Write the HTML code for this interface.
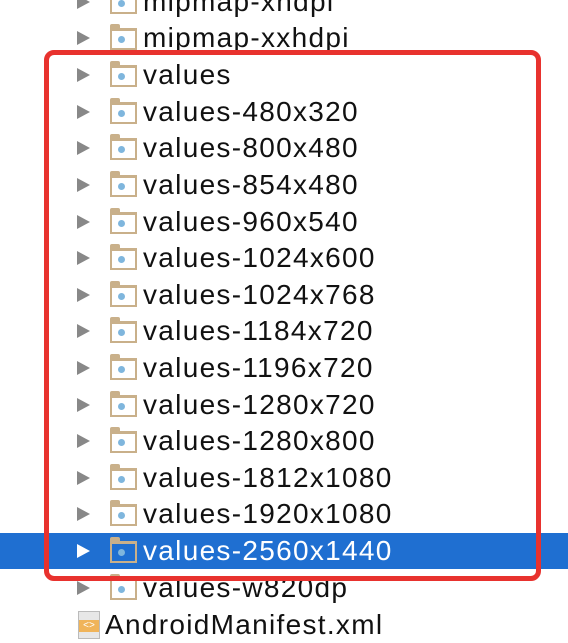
<!DOCTYPE html><html><head><style>
body{margin:0;width:568px;height:638px;background:#fff;overflow:hidden;position:relative;font-family:"Liberation Sans",sans-serif}
.r{position:absolute;left:0;width:568px;height:36px}
.t{position:absolute;left:77px;top:11px;width:0;height:0;border-left:13px solid #888;border-top:7px solid transparent;border-bottom:7px solid transparent}
.f{position:absolute;left:110px;top:8px;width:23px;height:17px;border:2px solid #c9b08a;border-top-width:3px;background:#fff}
.f:before{content:"";position:absolute;left:-2px;top:-7px;width:10px;height:4px;background:#c9b08a;border-radius:2px 2px 0 0}
.f:after{content:"";position:absolute;left:6px;top:5px;width:7px;height:7px;border-radius:50%;background:#7fb6dd}
.n{position:absolute;left:143px;top:0;font-size:28px;line-height:36px;color:#111;letter-spacing:1.3px}
.sel{background:#1f6fd1}.sel .n{color:#fff}.sel .t{border-left-color:#fff}.sel .f{background:#1f6fd1}
.box{position:absolute;left:44px;top:50px;width:487px;height:521px;border:5px solid #e8322e;border-radius:10px}
</style></head><body>
<div class="r" style="top:-16px"><div class="t"></div><div class="f"></div><div class="n">mipmap-xhdpi</div></div>
<div class="r" style="top:20px"><div class="t"></div><div class="f"></div><div class="n">mipmap-xxhdpi</div></div>
<div class="r" style="top:57px"><div class="t"></div><div class="f"></div><div class="n">values</div></div>
<div class="r" style="top:94px"><div class="t"></div><div class="f"></div><div class="n">values-480x320</div></div>
<div class="r" style="top:130px"><div class="t"></div><div class="f"></div><div class="n">values-800x480</div></div>
<div class="r" style="top:167px"><div class="t"></div><div class="f"></div><div class="n">values-854x480</div></div>
<div class="r" style="top:204px"><div class="t"></div><div class="f"></div><div class="n">values-960x540</div></div>
<div class="r" style="top:240px"><div class="t"></div><div class="f"></div><div class="n">values-1024x600</div></div>
<div class="r" style="top:277px"><div class="t"></div><div class="f"></div><div class="n">values-1024x768</div></div>
<div class="r" style="top:313px"><div class="t"></div><div class="f"></div><div class="n">values-1184x720</div></div>
<div class="r" style="top:350px"><div class="t"></div><div class="f"></div><div class="n">values-1196x720</div></div>
<div class="r" style="top:387px"><div class="t"></div><div class="f"></div><div class="n">values-1280x720</div></div>
<div class="r" style="top:423px"><div class="t"></div><div class="f"></div><div class="n">values-1280x800</div></div>
<div class="r" style="top:460px"><div class="t"></div><div class="f"></div><div class="n">values-1812x1080</div></div>
<div class="r" style="top:496px"><div class="t"></div><div class="f"></div><div class="n">values-1920x1080</div></div>
<div class="r sel" style="top:533px"><div class="t"></div><div class="f"></div><div class="n">values-2560x1440</div></div>
<div class="r" style="top:570px"><div class="t"></div><div class="f"></div><div class="n">values-w820dp</div></div>
<div class="r" style="top:607px"><div style="position:absolute;left:78px;top:4px;width:20px;height:26px;background:#e7e7e7;border:1px solid #bbb"><div style="position:absolute;left:0;top:8px;width:20px;height:12px;background:#f0b45a;color:#fff;font-size:10px;line-height:12px;text-align:center">&lt;&gt;</div></div><div class="n" style="left:105px">AndroidManifest.xml</div></div>
<div class="box"></div>
</body></html>
